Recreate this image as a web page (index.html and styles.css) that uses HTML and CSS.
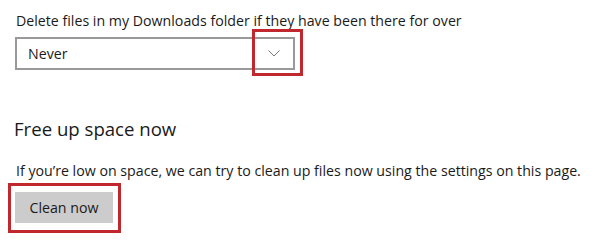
FILE: index.html
```html
<!DOCTYPE html>
<html>
<head>
    <title>Storage sense</title>
    <link rel="stylesheet" href="styles.css">
</head>
<body>
  <p class="label">Delete files in my Downloads folder if they have been there for over</p>
  <div class="select-wrap">
    <div class="select">
      <span>Never</span>
      <svg class="chevron" width="12" height="7" viewBox="0 0 12 7">
        <path d="M0.5 0.5 L6 6 L11.5 0.5" fill="none" stroke="#777" stroke-width="1"/>
      </svg>
    </div>
    <div class="mark mark-chevron"></div>
  </div>

  <h2>Free up space now</h2>
  <p class="text">If you’re low on space, we can try to clean up files now using the settings on this page.</p>
  <div class="mark-button">
    <button class="button">Clean now</button>
  </div>
</body>
</html>
```

FILE: styles.css
```css
body {
    margin: 0;
    padding: 0 0 0 16px;
    background-color: #fff;
    color: #1a1a1a;
    font-family: "Open Sans", "Noto Sans", sans-serif;
    font-size: 14.2px;
}

.label {
    margin: 0;
    padding-top: 11px;
    line-height: 20px;
}

.select-wrap {
    position: relative;
    margin-top: 6px;
    margin-left: -1px;
}

.select {
    box-sizing: border-box;
    width: 280px;
    height: 33px;
    border: 2px solid #999;
    display: flex;
    align-items: center;
    justify-content: space-between;
    padding: 0 10px 0 11px;
}

.chevron {
    margin-right: 3px;
}

.mark {
    position: absolute;
    box-sizing: border-box;
    border: 3px solid #c0282d;
}

.mark-chevron {
    left: 237px;
    top: -8px;
    width: 51px;
    height: 47px;
}

h2 {
    margin: 46px 0 0 -2px;
    font-size: 18.6px;
    font-weight: normal;
    line-height: 26px;
}

.text {
    margin: 19px 0 0 0;
    line-height: 20px;
}

.mark-button {
    display: inline-block;
    margin: 2px 0 0 -8px;
    border: 3px solid #c0282d;
    padding: 6px 5px 7px 4px;
}

.button {
    display: block;
    width: 98px;
    height: 31px;
    border: none;
    background-color: #ccc;
    color: #1a1a1a;
    font-family: inherit;
    font-size: 14.2px;
    padding: 0;
}
```
